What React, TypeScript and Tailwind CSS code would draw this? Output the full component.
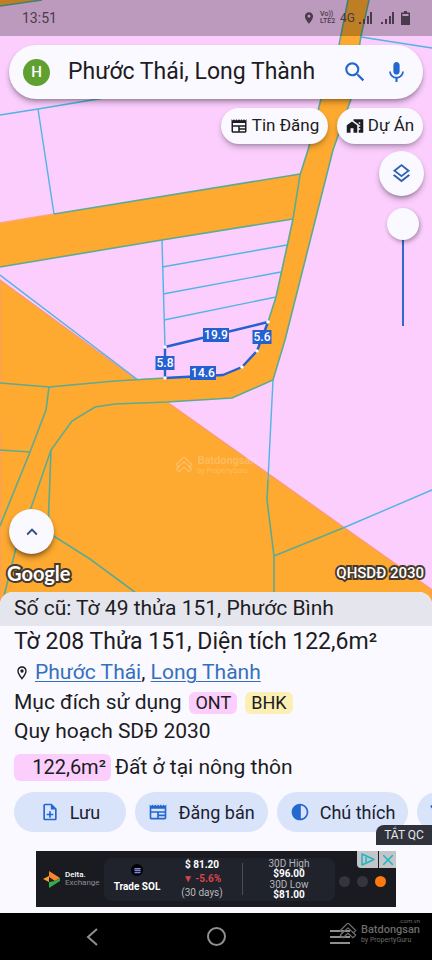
import { useState } from "react";
import {
  MdContrast,
  MdHomeWork,
  MdLocationOn,
  MdMic,
  MdNewspaper,
  MdOutlineLayers,
  MdOutlineLocationOn,
  MdOutlineNoteAdd,
  MdSearch,
  MdKeyboardArrowUp,
  MdFilterAlt,
} from "react-icons/md";

const ORANGE = "#fea930";
const PARCEL_LINE = "#4fb4e6";
const ROAD_LINE = "#5cab93";
const EDGE = "#2460cf";

const vertices = [
  [165, 347],
  [268, 322],
  [257, 351],
  [242, 367],
  [165, 378],
];

const edgeLabels = [
  { text: "19.9", x: 216, y: 335, w: 26 },
  { text: "5.6", x: 262, y: 337, w: 19 },
  { text: "5.8", x: 165, y: 363, w: 19 },
  { text: "14.6", x: 203, y: 373, w: 26 },
];

function WatermarkLogo({ className }: { className?: string }) {
  return (
    <svg viewBox="0 0 20 20" className={className} fill="none" stroke="currentColor" strokeWidth="1.4" strokeLinejoin="round" strokeLinecap="round" aria-hidden="true">
      <path d="M1.500 9.500 L9 2 Q10 1.200 11 2 L18.500 9.500 L16 12 L10 6.500 L4 12 Z" />
      <path d="M4 12 L1.500 14.500 L4.500 17.500 L10 12.500 L15.500 17.500 L18.500 14.500 L16 12" />
    </svg>
  );
}

function ParcelMap() {
  return (
    <svg
      viewBox="0 0 432 604"
      preserveAspectRatio="xMidYMid slice"
      className="absolute inset-0 h-full w-full"
      role="img"
      aria-label="QHSDĐ 2030"
    >
      <rect width="432" height="604" fill="#fbcefd" />
      <path d="M0 0H42L0 6Z" fill={ORANGE} />
      <path d="M0 280L167 402L432 590V604H0Z" fill={ORANGE} stroke="#fd9a72" strokeWidth="1.5" />
      <path d="M0 223L54 214L300 174L293 219L162 240L0 267Z" fill={ORANGE} />
      <path d="M0 223L54 214" stroke="#fda56e" strokeWidth="1.5" />
      <path
        d="M348 0L339 45L321 99L308 150L300 175L293 219L276 297L268 322L257 350L242 367L223 375L165 378L115 380L49 387L0 383V430L72 421L95 407L115 404L167 402L232 398L273 380L285 340L333 150L351 99L361 36L369 0Z"
        fill={ORANGE}
      />
      <g fill="none" stroke={PARCEL_LINE} strokeWidth="1.4">
        <path d="M0 115L38 109L110 97" />
        <path d="M38 109L54 214" />
        <path d="M361 37L432 48" />
        <path d="M162 240L165 347" />
        <path d="M162 267L287 245M163 294L281 272M164 320L276 297" />
        <path d="M0 275L138 380" />
        <path d="M273 380L268 480M343 528L432 490" />
      </g>
      <g fill="none" stroke={ROAD_LINE} strokeWidth="1.6">
        <path d="M42 0L0 6" />
        <path d="M54 214L300 174" />
        <path d="M0 267L162 240L293 219" />
        <path d="M348 0L339 45L321 99L308 150L300 175L293 219L276 297L268 322" />
        <path d="M369 0L361 36L351 99L333 150L285 340L273 380L232 398L167 402L115 404L95 407L72 421L51 450L32 505L16 548L2 604" />
        <path d="M0 383L49 387L115 381L165 378" />
        <path d="M49 387L46 410L30 452L0 526M0 450L30 452" />
        <path d="M51 450L48 530M52 535L90 559L132 590L150 604" />
        <path d="M268 480L267 500L274 556V604M274 556L343 528" />
      </g>
      <path d="M165 347L268 322L257 351L242 367L223 375L165 378Z" fill="none" stroke={EDGE} strokeWidth="2.4" strokeLinejoin="round" />
      {vertices.map(([x, y]) => (
        <circle key={`${x}-${y}`} cx={x} cy={y} r="1.8" fill="#fff" />
      ))}
      {edgeLabels.map((l) => (
        <g key={l.text}>
          <rect x={l.x - l.w / 2} y={l.y - 7} width={l.w} height="14" fill={EDGE} />
          <text x={l.x} y={l.y + 4} textAnchor="middle" fill="#fff" className="text-[12px] font-medium">
            {l.text}
          </text>
        </g>
      ))}
    </svg>
  );
}

function SignalIcon() {
  return (
    <svg viewBox="0 0 14 13" className="h-[13px] w-[14px]" fill="currentColor" aria-hidden="true">
      <rect x="0" y="10" width="2" height="2" />
      <rect x="4" y="7" width="2" height="5" />
      <rect x="8" y="4" width="2" height="8" />
      <rect x="11" y="0" width="2" height="12" />
    </svg>
  );
}

function StatusBar() {
  return (
    <div className="flex h-9 items-center bg-black/25 pl-[22px] pr-[22px] text-[#4b3a4c]">
      <span className="flex-1 text-[14px]">13:51</span>
      <MdLocationOn className="size-[14px]" />
      <span className="ml-1 flex w-4 flex-col text-[7px] leading-[7px] font-medium">
        <span>Vo))</span>
        <span>LTE2</span>
      </span>
      <span className="ml-1 text-[12px]">4G</span>
      <span className="ml-1"><SignalIcon /></span>
      <span className="ml-2"><SignalIcon /></span>
      <svg viewBox="0 0 9 14" className="ml-1.5 h-[14px] w-[9px]" aria-hidden="true">
        <path d="M3 0h3v1.500h3v12.500h-9v-12.500h3z" fill="currentColor" />
        <rect x="1.5" y="3" width="6" height="2" fill="#bd9bbf" />
      </svg>
    </div>
  );
}

function DeltaLogo() {
  return (
    <svg viewBox="0 0 18 17" className="h-[17px] w-[18px]" aria-hidden="true">
      <path d="M6 0L17 7L12 10L6 6Z" fill="#f8842c" />
      <path d="M0 8L6 5V11Z" fill="#f8a02c" />
      <path d="M17 7V10L6 17V11L12 10Z" fill="#2fae4c" />
    </svg>
  );
}

function AdBanner() {
  return (
    <aside className="relative mx-auto flex h-14 w-[360px] items-center bg-[#191b20] text-white">
      <a href="#delta" className="ml-[7px] flex w-[61px] items-center gap-1">
        <DeltaLogo />
        <span className="flex flex-col text-[8px] leading-[8px]">
          <b className="font-medium">Delta.</b>
          <span className="text-[#8c8d92]">Exchange</span>
        </span>
      </a>
      <div className="flex h-[43px] w-[231px] items-center rounded-lg bg-[#20232c] text-[10px]">
        <div className="flex w-[66px] flex-col items-center gap-1 font-bold leading-[14px]">
          <span className="grid size-3 place-items-center rounded-full bg-black">
            <svg viewBox="0 0 8 8" className="size-[7px]" aria-hidden="true">
              <path d="M1 1h7l-1 1.500H0zM0 3.200h7l1 1.500H1zM1 5.500h7l-1 1.500H0z" fill="#7f87e8" />
            </svg>
          </span>
          <span>Trade SOL</span>
        </div>
        <div className="flex w-[64px] flex-col items-center leading-[14px]">
          <b>$ 81.20</b>
          <b className="text-[#d9434a]">▼ -5.6%</b>
          <span className="text-[#b6b7bb]">(30 days)</span>
        </div>
        <div className="ml-[8px] h-8 w-px bg-[#4a4d56]" />
        <div className="flex flex-1 flex-col items-center text-center leading-[10px]">
          <span className="text-[#b6b7bb]">30D High</span>
          <b>$96.00</b>
          <span className="mt-px text-[#b6b7bb]">30D Low</span>
          <b>$81.00</b>
        </div>
      </div>
      <div className="mt-1 ml-1 flex gap-[7px]">
        <span className="size-[11px] rounded-full bg-[#34353d]" />
        <span className="size-[11px] rounded-full bg-[#34353d]" />
        <span className="size-[11px] rounded-full bg-[#ff7a0e]" />
      </div>
      <div className="absolute top-0 right-0 flex gap-px text-[#1fb6c4]">
        <button type="button" aria-label="AdChoices" className="grid h-[17px] w-[21px] place-items-center rounded-bl-sm bg-[#c4c5c9]">
          <svg viewBox="0 0 14 13" className="h-[13px] w-[14px]" fill="none" stroke="currentColor" strokeWidth="1.5" strokeLinejoin="round">
            <path d="M1 1L13 6.500L1 12Z" />
            <path d="M5 4V9.500" />
          </svg>
        </button>
        <button type="button" aria-label="Close" className="grid size-[17px] place-items-center bg-[#c4c5c9]">
          <svg viewBox="0 0 10 10" className="size-[10px]" fill="none" stroke="currentColor" strokeWidth="1.5">
            <path d="M0 0L10 10M10 0L0 10" />
          </svg>
        </button>
      </div>
    </aside>
  );
}

const actionClass =
  "flex h-10 shrink-0 items-center gap-2.5 rounded-full bg-[#d9e4fa] text-[18px] text-[#1b2030]";

export default function App() {
  const [query, setQuery] = useState("Phước Thái, Long Thành");
  const [opacity, setOpacity] = useState(0);

  return (
    <main className="flex min-h-screen flex-col overflow-x-hidden bg-[#faf9ff] font-[Roboto,'Noto_Sans',sans-serif] text-[#1c1c22]">
      <section className="relative flex flex-1 flex-col">
        <ParcelMap />
        <div className="relative flex flex-1 flex-col">
          <StatusBar />
          <form
            onSubmit={(e) => e.preventDefault()}
            className="mx-[9px] mt-[9px] flex h-[54px] items-center rounded-full bg-[#faf9ff] pr-3.5 pl-3.5 shadow-md shadow-black/30"
          >
            <button type="button" aria-label="H" className="size-[27px] shrink-0 rounded-full bg-[#5fa030] text-[15px] font-medium text-white">
              H
            </button>
            <input
              aria-label="Search"
              value={query}
              onChange={(e) => setQuery(e.target.value)}
              className="ml-[18px] min-w-0 flex-1 bg-transparent text-[23px] outline-none"
            />
            <button type="submit" aria-label="Search" className="text-[#2467cf]">
              <MdSearch className="size-[26px]" />
            </button>
            <button type="button" aria-label="Voice" className="ml-4 text-[#2467cf]">
              <MdMic className="size-[25px]" />
            </button>
          </form>

          <div className="mt-[9px] mr-[9px] flex justify-end gap-[9px] text-[17px]">
            <button type="button" className="flex h-9 w-[107px] items-center justify-center gap-1 rounded-full bg-[#faf9ff] shadow-md shadow-black/25">
              <MdNewspaper className="size-[18px]" />
              Tin Đăng
            </button>
            <button type="button" className="flex h-9 w-[86px] items-center justify-center gap-1 rounded-full bg-[#faf9ff] shadow-md shadow-black/25">
              <MdHomeWork className="size-[18px]" />
              Dự Án
            </button>
          </div>

          <div className="mt-[7px] mr-[8px] flex flex-col items-end gap-3 self-end">
            <button type="button" aria-label="Layers" className="grid size-[45px] place-items-center rounded-full bg-[#faf9ff] text-[#2f62b5] shadow-md shadow-black/30">
              <MdOutlineLayers className="size-[23px]" />
            </button>
            <input
              type="range"
              aria-label="Opacity"
              min={0}
              max={100}
              value={opacity}
              onChange={(e) => setOpacity(Number(e.target.value))}
              className="mr-[5px] h-[118px] w-8 appearance-none bg-[linear-gradient(#3566cd,#3566cd)] bg-[length:2px_100%] bg-center bg-no-repeat [writing-mode:vertical-lr] [&::-webkit-slider-thumb]:size-8 [&::-webkit-slider-thumb]:appearance-none [&::-webkit-slider-thumb]:rounded-full [&::-webkit-slider-thumb]:bg-[#faf9ff] [&::-webkit-slider-thumb]:shadow-[1px_2px_4px_rgba(0,0,0,0.35)]"
            />
          </div>

          <div className="pointer-events-none mt-auto flex flex-col pb-[18px]">
            <div className="mb-[34px] flex items-center justify-center gap-1 text-white/25">
              <WatermarkLogo className="size-[18px]" />
              <span className="flex flex-col leading-[8px]">
                <span className="text-[11px] leading-[12px] font-medium">Batdongsan</span>
                <span className="text-[7px]">by PropertyGuru</span>
              </span>
            </div>
            <button type="button" aria-label="Expand" className="pointer-events-auto ml-[9px] grid size-[45px] place-items-center rounded-full bg-[#faf9ff] text-[#2c5184] shadow-md shadow-black/40">
              <MdKeyboardArrowUp className="size-[22px]" />
            </button>
            <div className="mt-1.5 flex h-[26px] items-center justify-between pr-2 pl-[7px] text-white [-webkit-text-stroke:4px_#47392c] [paint-order:stroke_fill]">
              <span className="font-['Lato'] text-[20px] font-bold">Google</span>
              <span className="text-[15px] font-medium">QHSDĐ 2030</span>
            </div>
          </div>
        </div>
      </section>

      <section className="relative -mt-3 overflow-hidden rounded-t-[13px] bg-[#faf9ff] pb-1.5">
        <p className="flex h-[34px] items-center bg-[#e5e5ee] px-3.5 text-[21px]">Số cũ: Tờ 49 thửa 151, Phước Bình</p>
        <h1 className="flex h-8 items-center px-3.5 text-[23px]">Tờ 208 Thửa 151, Diện tích 122,6m²</h1>
        <p className="flex h-[30px] items-center px-3.5 text-[21px]">
          <MdOutlineLocationOn className="mr-[5px] size-4" />
          <span>
            <a href="#phuoc-thai" className="text-[#3470bd] underline decoration-1 underline-offset-2">Phước Thái</a>,{" "}
            <a href="#long-thanh" className="text-[#3470bd] underline decoration-1 underline-offset-2">Long Thành</a>
          </span>
        </p>
        <p className="flex h-[30px] items-center px-3.5 text-[21px]">
          Mục đích sử dụng
          <span className="ml-2 rounded-md bg-[#fbcefd] px-1.5 text-[18px] leading-[22px]">ONT</span>
          <span className="ml-2 rounded-md bg-[#fbefb4] px-1.5 text-[18px] leading-[22px]">BHK</span>
        </p>
        <p className="flex h-7 items-center px-3.5 text-[21px]">Quy hoạch SDĐ 2030</p>
        <p className="mt-2 flex h-[27px] items-center px-3.5 text-[21px]">
          <span className="mr-1 h-[27px] w-[97px] rounded-md bg-[#fbcefd] pr-[5px] text-right text-[20px] leading-[27px]">122,6m²</span>
          Đất ở tại nông thôn
        </p>

        <div className="mt-[11px] flex gap-[9px] overflow-hidden pl-3.5">
          <button type="button" className={`${actionClass} w-[112px] justify-center`}>
            <MdOutlineNoteAdd className="size-5 text-[#2467cf]" />
            Lưu
          </button>
          <button type="button" className={`${actionClass} w-[133px] justify-center`}>
            <MdNewspaper className="size-5 text-[#2467cf]" />
            Đăng bán
          </button>
          <button type="button" className={`${actionClass} w-[131px] justify-center`}>
            <MdContrast className="size-5 text-[#2467cf]" />
            Chú thích
          </button>
          <button type="button" aria-label="Lọc" className={`${actionClass} w-[112px] pl-2.5`}>
            <MdFilterAlt className="size-5 text-[#2467cf]" />
          </button>
        </div>
        <button type="button" className="relative -mt-[7px] ml-auto block h-5 w-14 rounded-tl-lg bg-[#30323c] text-[12px] text-[#e6e6ea]">
          TẮT QC
        </button>
        <div className="mt-1.5">
          <AdBanner />
        </div>
      </section>

      <nav className="relative grid h-[47px] grid-cols-3 place-items-center bg-black px-[30px] text-[#8f8f8f]">
        <button type="button" aria-label="Back">
          <svg viewBox="0 0 12 18" className="h-[18px] w-3" fill="none" stroke="currentColor" strokeWidth="2">
            <path d="M11 1L2 9L11 17" />
          </svg>
        </button>
        <button type="button" aria-label="Home" className="size-[19px] rounded-full border-2 border-current" />
        <button type="button" aria-label="Recents" className="flex flex-col gap-1">
          <span className="h-[2px] w-5 bg-current" />
          <span className="h-[2px] w-5 bg-current" />
          <span className="h-[2px] w-5 bg-current" />
        </button>
        <div className="pointer-events-none absolute top-1 right-3 flex items-center gap-1 text-[#6b6b6b]">
          <WatermarkLogo className="size-[18px]" />
          <span className="flex flex-col">
            <span className="self-end text-[6px] leading-[7px]">.com.vn</span>
            <span className="text-[11px] leading-[12px] font-medium">Batdongsan</span>
            <span className="text-[7px] leading-[8px]">by PropertyGuru</span>
          </span>
        </div>
      </nav>
    </main>
  );
}
